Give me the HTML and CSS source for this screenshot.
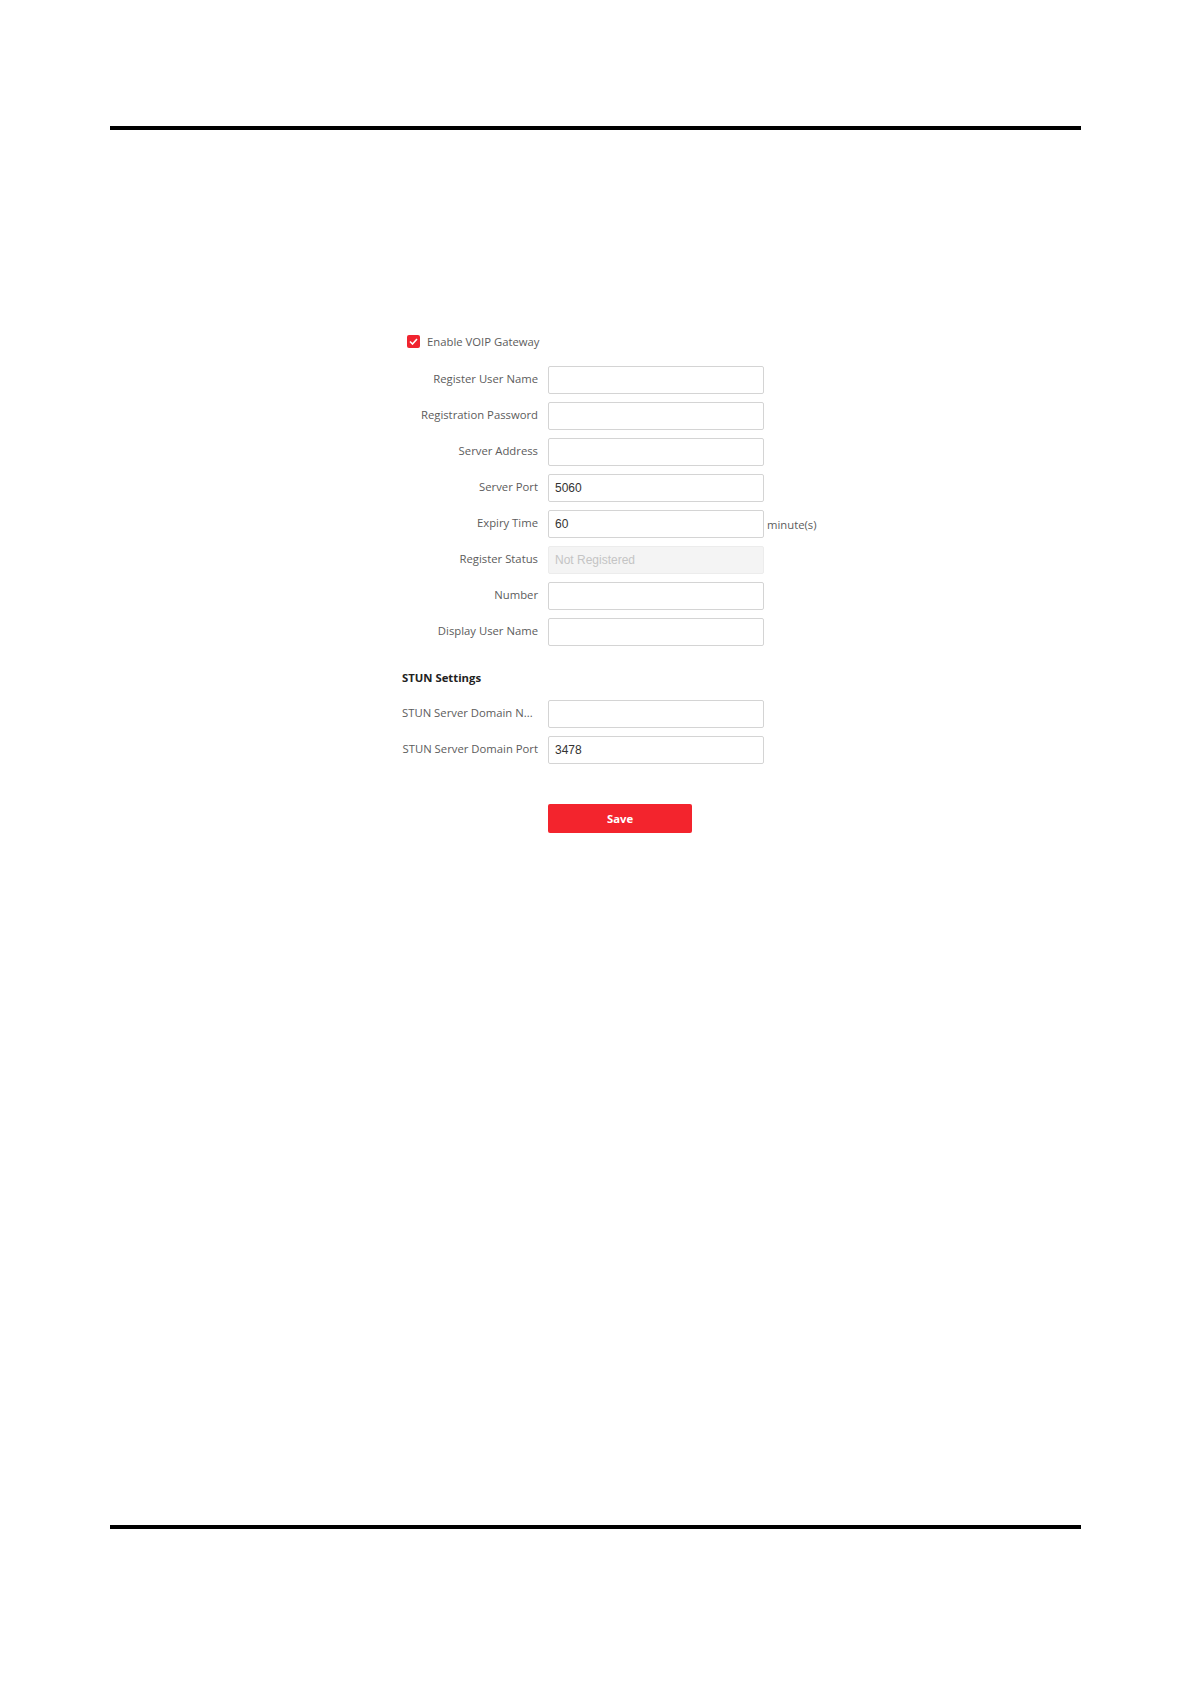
FILE: index.html
```html
<!DOCTYPE html>
<html lang="en">
<head>
<meta charset="UTF-8">
<meta name="viewport" content="width=device-width, initial-scale=1.0">
<title>VOIP Gateway</title>
<link rel="stylesheet" href="styles.css">
</head>
<body>
<div class="page">
    <div class="rule"></div>

    <div class="form">
        <div class="check-row">
            <span class="checkbox">
                <svg width="9" height="7" viewBox="0 0 9 7"><path d="M1 3.5 L3.5 6 L8 1" fill="none" stroke="#fff" stroke-width="1.6"/></svg>
            </span>
            <span class="check-label">Enable VOIP Gateway</span>
        </div>

        <div class="row"><label>Register User Name</label><input class="field" type="text" value=""></div>
        <div class="row"><label>Registration Password</label><input class="field" type="text" value=""></div>
        <div class="row"><label>Server Address</label><input class="field" type="text" value=""></div>
        <div class="row"><label>Server Port</label><input class="field" type="text" value="5060"></div>
        <div class="row"><label>Expiry Time</label><input class="field" type="text" value="60"><span class="unit">minute(s)</span></div>
        <div class="row"><label>Register Status</label><input class="field disabled" type="text" value="Not Registered" disabled></div>
        <div class="row"><label>Number</label><input class="field" type="text" value=""></div>
        <div class="row"><label>Display User Name</label><input class="field" type="text" value=""></div>

        <h3 class="section">STUN Settings</h3>

        <div class="row"><label class="left">STUN Server Domain N...</label><input class="field" type="text" value=""></div>
        <div class="row"><label>STUN Server Domain Port</label><input class="field" type="text" value="3478"></div>

        <button class="save">Save</button>
    </div>

    <div class="rule bottom"></div>
</div>
</body>
</html>
```
FILE: styles.css
```css
body {
    margin: 0;
    background-color: #fff;
    font-family: "Open Sans", "Noto Sans", sans-serif;
}
.page {
    height: 1684px;
    display: flex;
    flex-direction: column;
}
.rule {
    margin: 126px 0 0 110px;
    width: 971px;
    height: 4px;
    background-color: #000;
}
.rule.bottom {
    margin-top: auto;
    margin-bottom: 155px;
}
.form {
    margin: 201px 0 0 402px;
    display: flex;
    flex-direction: column;
}
.check-row {
    display: flex;
    align-items: center;
    height: 20px;
    margin-bottom: 15px;
}
.checkbox {
    width: 13px;
    height: 13px;
    margin-left: 5px;
    border-radius: 2px;
    background-color: #f0242f;
    display: flex;
    align-items: center;
    justify-content: center;
}
.check-label {
    margin-left: 7px;
    font-size: 11.3px;
    color: #5c5c5c;
}
.row {
    display: flex;
    align-items: center;
    height: 28px;
    margin-bottom: 8px;
}
.row label {
    width: 136px;
    margin: -3px 10px 0 0;
    text-align: right;
    font-size: 11.3px;
    color: #5c5c5c;
    white-space: nowrap;
}
.row label.left {
    text-align: left;
}
.field {
    box-sizing: border-box;
    width: 216px;
    height: 28px;
    margin: 0;
    padding: 0 6px;
    border: 1px solid #d4d4d4;
    border-radius: 2px;
    font-family: "Liberation Sans", Arial, sans-serif;
    font-size: 12px;
    color: #333;
    background-color: #fff;
}
.field.disabled {
    background-color: #f4f4f4;
    border-color: #ececec;
    color: #c4c4c4;
}
.unit {
    margin-left: 3px;
    font-size: 11.3px;
    color: #5c5c5c;
}
.section {
    margin: 14px 0 12px 0;
    height: 20px;
    line-height: 20px;
    font-size: 11.3px;
    font-weight: bold;
    color: #222;
}
.save {
    margin: 32px 0 0 146px;
    width: 144px;
    height: 29px;
    border: none;
    border-radius: 2px;
    background-color: #f3242d;
    color: #fff;
    font-family: "Open Sans", "Noto Sans", sans-serif;
    font-size: 11.3px;
    font-weight: bold;
    cursor: pointer;
}
```
